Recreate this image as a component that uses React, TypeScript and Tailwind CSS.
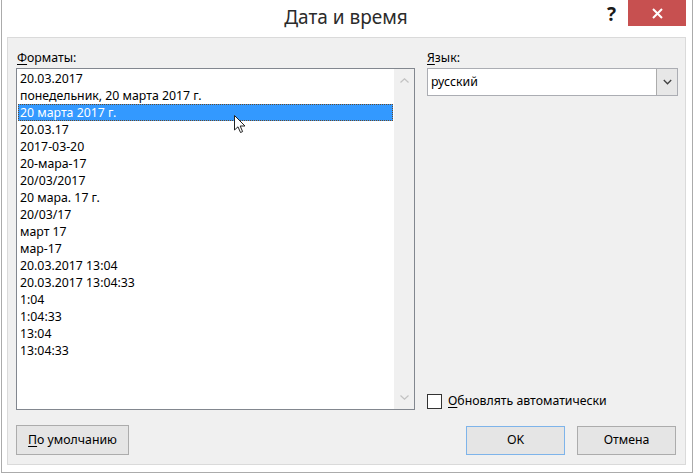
import React from "react";

const items = [
  "20.03.2017",
  "понедельник, 20 марта 2017 г.",
  "20 марта 2017 г.",
  "20.03.17",
  "2017-03-20",
  "20-мара-17",
  "20/03/2017",
  "20 мара. 17 г.",
  "20/03/17",
  "март 17",
  "мар-17",
  "20.03.2017 13:04",
  "20.03.2017 13:04:33",
  "1:04",
  "1:04:33",
  "13:04",
  "13:04:33",
];

const font = { fontFamily: '"Noto Sans", "Open Sans", sans-serif' };

export default function App() {
  return (
    <div
      className="w-[694px] h-[473px] bg-white pl-[1px] pr-[1px] text-black"
      style={font}
    >
      <div className="h-full flex flex-col border-l border-r border-b border-[#ababab]">
        {/* Title bar */}
        <div className="relative h-[37px] flex items-center justify-center">
          <span className="text-[19px] text-[#2b2b2b] leading-none -mt-[2px] -ml-[2px]">
            Дата и время
          </span>
          <span className="absolute left-[605px] top-[3px] text-[19px] font-bold leading-[22px] text-[#1a1a1a]">
            ?
          </span>
          <div className="absolute left-[626px] top-0 w-[58px] h-[26px] bg-[#c75050] flex items-center justify-center">
            <svg width="11" height="11" viewBox="0 0 11 11">
              <path d="M1 1 L10 10 M10 1 L1 10" stroke="white" strokeWidth="2" />
            </svg>
          </div>
        </div>

        {/* Panel */}
        <div className="flex-1 mx-[5px] mr-[6px] mb-[7px] border border-[#dadada] bg-[#f0f0f0] flex flex-col pt-[12px] pl-[8px] pr-[7px] pb-[9px]">
          <div className="flex gap-[12px] h-[360px]">
            {/* Left column */}
            <div className="w-[399px] flex flex-col">
              <div className="text-[12.3px] leading-[16px] h-[16px] mb-[2px] pl-[1px]">
                <span className="underline underline-offset-2">Ф</span>орматы:
              </div>
              <div className="relative flex-1 border border-[#82878f] bg-white flex">
                <div className="flex-1 pt-[1px] pl-[1px] pr-[1px]">
                  {items.map((t, i) =>
                    i === 2 ? (
                      <div
                        key={i}
                        className="h-[17px] leading-[15px] text-[12.3px] bg-[#3399ff] text-white border border-dotted border-[#6b4b2a] pl-[1px] whitespace-nowrap"
                      >
                        {t}
                      </div>
                    ) : (
                      <div
                        key={i}
                        className="h-[17px] leading-[17px] text-[12.3px] pl-[2px] whitespace-nowrap"
                      >
                        {t}
                      </div>
                    )
                  )}
                </div>
                <div className="w-[20px] bg-[#f0f0f0] flex flex-col items-center justify-between py-[9px]">
                  <svg width="9" height="5" viewBox="0 0 9 5">
                    <path d="M0.5 4.5 L4.5 0.8 L8.5 4.5" fill="none" stroke="#c2c2c2" strokeWidth="1.2" />
                  </svg>
                  <svg width="9" height="5" viewBox="0 0 9 5">
                    <path d="M0.5 0.5 L4.5 4.2 L8.5 0.5" fill="none" stroke="#c2c2c2" strokeWidth="1.2" />
                  </svg>
                </div>
                {/* mouse cursor */}
                <svg
                  className="absolute left-[217px] top-[46px]"
                  width="13"
                  height="19"
                  viewBox="0 0 13 19"
                >
                  <path
                    d="M0.5 0.5 L0.5 15 L4 11.8 L6.5 17.5 L8.6 16.6 L6.2 11 L11 11 Z"
                    fill="white"
                    stroke="#222"
                    strokeWidth="1"
                    strokeLinejoin="miter"
                  />
                </svg>
              </div>
            </div>

            {/* Right column */}
            <div className="flex-1 flex flex-col">
              <div className="text-[12.3px] leading-[16px] h-[16px] mb-[2px]">
                <span className="underline underline-offset-2">Я</span>зык:
              </div>
              <div className="h-[28px] border border-[#abadb3] bg-white flex">
                <div className="flex-1 text-[12.3px] leading-[26px] pl-[3px]">русский</div>
                <div className="w-[21px] bg-[#e7e7e7] border-l border-[#acacac] flex items-center justify-center">
                  <svg width="9" height="6" viewBox="0 0 9 6">
                    <path d="M0.8 1 L4.5 4.8 L8.2 1" fill="none" stroke="#404040" strokeWidth="1.3" />
                  </svg>
                </div>
              </div>
              <div className="flex-1" />
              <div className="flex items-center gap-[6px] mb-[1px]">
                <div className="w-[15px] h-[15px] border border-[#333] bg-white" />
                <span className="text-[12.3px] leading-[16px]">
                  <span className="underline underline-offset-2">О</span>бновлять автоматически
                </span>
              </div>
            </div>
          </div>

          {/* Buttons row */}
          <div className="mt-auto flex items-end">
            <button className="w-[113px] h-[30px] border border-[#acacac] bg-[#e5e5e5] text-[12.3px] text-black">
              <span className="underline underline-offset-2">П</span>о умолчанию
            </button>
            <div className="flex-1" />
            <button className="w-[99px] h-[29px] border border-[#7eb4ea] bg-[#e5e5e5] text-[12.3px] text-black">
              OK
            </button>
            <button className="ml-[12px] mr-[2px] w-[99px] h-[29px] border border-[#acacac] bg-[#e5e5e5] text-[12.3px] text-black">
              Отмена
            </button>
          </div>
        </div>
      </div>
    </div>
  );
}
